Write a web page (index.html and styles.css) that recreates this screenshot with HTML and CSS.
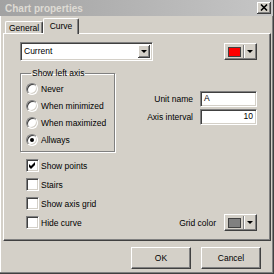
FILE: index.html
```html
<!DOCTYPE html>
<html lang="en">

<head>
    <meta charset="UTF-8">
    <title>Chart properties</title>
    <link rel="stylesheet" href="styles.css">
</head>

<body>
    <div class="dialog">
        <!-- title bar -->
        <div class="titlebar">
            <span class="title">Chart properties</span>
            <span class="closebtn">
                <svg width="8" height="7" viewBox="0 0 8 7"><path d="M1 0.5 L7 6.5 M7 0.5 L1 6.5" stroke="#000" stroke-width="1.6"/></svg>
            </span>
        </div>

        <!-- tabs -->
        <nav class="tabs">
            <div class="tab">General</div>
            <div class="tab active">Curve</div>
        </nav>

        <div class="panel">
            <div class="toprow">
                <div class="combo">
                    <span class="combo-text">Current</span>
                    <span class="dropbtn"><i class="arrow"></i></span>
                </div>
                <div class="colorbtn">
                    <span class="swatch red"></span>
                    <span class="sep"></span>
                    <i class="arrow"></i>
                </div>
            </div>

            <div class="body">
                <div class="leftcol">
                    <fieldset class="group">
                        <legend>Show left axis</legend>
                        <div class="row"><span class="radio"></span><span>Never</span></div>
                        <div class="row"><span class="radio"></span><span>When minimized</span></div>
                        <div class="row"><span class="radio"></span><span>When maximized</span></div>
                        <div class="row"><span class="radio checked"></span><span>Allways</span></div>
                    </fieldset>
                    <div class="checks">
                        <div class="crow">
                            <span class="check">
                                <svg width="7" height="7" viewBox="0 0 7 7"><path d="M0 2 L2 4 L6 0 L6 3 L2 7 L0 5 Z" fill="#000"/></svg>
                            </span>
                            <span>Show points</span>
                        </div>
                        <div class="crow"><span class="check"></span><span>Stairs</span></div>
                        <div class="crow"><span class="check"></span><span>Show axis grid</span></div>
                        <div class="crow"><span class="check"></span><span>Hide curve</span></div>
                    </div>
                </div>

                <div class="rightcol">
                    <div class="fields">
                        <label>Unit name</label>
                        <div class="edit">A</div>
                        <label>Axis interval</label>
                        <div class="edit num">10</div>
                    </div>
                    <div class="gridcolor">
                        <span>Grid color</span>
                        <div class="colorbtn">
                            <span class="swatch gray"></span>
                            <span class="sep"></span>
                            <i class="arrow"></i>
                        </div>
                    </div>
                </div>
            </div>
        </div>

        <div class="buttons">
            <div class="btn">OK</div>
            <div class="btn">Cancel</div>
        </div>
    </div>
</body>

</html>
```

FILE: styles.css
```css
* {
    margin: 0;
    padding: 0;
    box-sizing: border-box;
}

body {
    font-family: "Liberation Sans", Arial, sans-serif;
    font-size: 8.5px;
    color: #000;
    background: #d4d0c8;
}

i {
    font-style: normal;
}

.dialog {
    display: flex;
    flex-direction: column;
    width: 274px;
    height: 274px;
    background: #d4d0c8;
    border-right: 1px solid #404040;
    border-bottom: 1px solid #404040;
    box-shadow: inset -1px -1px #808080, inset 1px 0 #fff;
}

.titlebar {
    display: flex;
    height: 16px;
    padding: 0 2px 0 5px;
    align-items: center;
    justify-content: space-between;
    background: linear-gradient(to right, #a2a2a2, #c6c6c6);
}

.title {
    font-size: 10px;
    font-weight: bold;
    color: #dedbd4;
}

.closebtn {
    display: flex;
    width: 14px;
    height: 12px;
    align-items: center;
    justify-content: center;
    background: #d4d0c8;
    border-right: 1px solid #404040;
    border-bottom: 1px solid #404040;
    box-shadow: inset 1px 1px #fff, inset -1px -1px #808080;
}

/* tabs */
.tabs {
    display: flex;
    height: 15px;
    margin-top: 2px;
    padding-left: 5px;
    align-items: flex-end;
}

.tab {
    display: flex;
    height: 12px;
    width: 38px;
    align-items: center;
    justify-content: center;
    background: #d4d0c8;
    border-top: 1px solid #fff;
    border-left: 1px solid #fff;
    border-right: 1px solid #404040;
    border-radius: 2px 2px 0 0;
    box-shadow: inset -1px 0 #808080;
}

.tab.active {
    position: relative;
    z-index: 1;
    width: 36px;
    height: 16px;
    margin-bottom: -1px;
    padding-bottom: 2px;
}

.panel {
    flex: 1;
    display: flex;
    flex-direction: column;
    margin: 0 2px 0 3px;
    padding: 8px 13px 0 16px;
    border-top: 1px solid #fff;
    border-left: 1px solid #fff;
    border-right: 1px solid #404040;
    border-bottom: 1px solid #404040;
    box-shadow: inset -1px -1px #808080;
}

.toprow {
    display: flex;
    align-items: center;
    justify-content: space-between;
}

.combo {
    display: flex;
    width: 133px;
    height: 19px;
    padding: 2px;
    background: #fff;
    border-top: 1px solid #808080;
    border-left: 1px solid #808080;
    border-right: 1px solid #fff;
    border-bottom: 1px solid #fff;
    box-shadow: inset 1px 1px #404040, inset -1px -1px #d4d0c8;
}

.combo-text {
    flex: 1;
    padding-left: 1px;
    line-height: 13px;
}

.dropbtn {
    display: flex;
    width: 12px;
    align-items: center;
    justify-content: center;
    background: #d4d0c8;
    border-right: 1px solid #404040;
    border-bottom: 1px solid #404040;
    box-shadow: inset 1px 1px #fff, inset -1px -1px #808080;
}

.arrow {
    display: block;
    width: 0;
    height: 0;
    border-left: 3px solid transparent;
    border-right: 3px solid transparent;
    border-top: 3px solid #000;
}

.colorbtn {
    display: flex;
    width: 33px;
    height: 17px;
    padding: 3px;
    align-items: center;
    background: #d4d0c8;
    border-top: 1px solid #fff;
    border-left: 1px solid #fff;
    border-right: 1px solid #404040;
    border-bottom: 1px solid #404040;
    box-shadow: inset -1px -1px #808080;
}

.swatch {
    width: 19px;
    height: 10px;
    border: 1px solid #404040;
}

.swatch.red {
    background: #ff0000;
}

.swatch.gray {
    background: #808080;
}

.sep {
    width: 2px;
    height: 13px;
    margin: 0 2px;
    border-left: 1px solid #808080;
    border-right: 1px solid #fff;
}

.body {
    display: flex;
    margin-top: 7px;
}

.leftcol {
    width: 95px;
}

.group {
    padding: 2px 0 3px 5px;
    border: 1px solid #808080;
    box-shadow: inset 1px 1px #fff, 1px 1px #fff;
}

.group legend {
    margin-left: 5px;
    padding: 0 1px;
    line-height: 10px;
}

.row {
    display: flex;
    height: 17px;
    align-items: center;
    gap: 3px;
}

.radio {
    position: relative;
    width: 12px;
    height: 12px;
    background: #fff;
    border-radius: 50%;
    border: 1px solid;
    border-color: #808080 #fff #fff #808080;
    box-shadow: inset 1px 1px #404040, inset -1px -1px #d4d0c8;
}

.radio.checked::after {
    content: '';
    position: absolute;
    left: 3px;
    top: 3px;
    width: 4px;
    height: 4px;
    border-radius: 50%;
    background: #000;
}

.checks {
    margin-top: 4px;
    padding-left: 6px;
}

.crow {
    display: flex;
    height: 19px;
    align-items: center;
    gap: 2px;
}

.check {
    display: flex;
    width: 13px;
    height: 13px;
    align-items: center;
    justify-content: center;
    background: #fff;
    border: 1px solid;
    border-color: #808080 #fff #fff #808080;
    box-shadow: inset 1px 1px #404040, inset -1px -1px #d4d0c8;
}

.rightcol {
    flex: 1;
    display: flex;
    flex-direction: column;
    justify-content: space-between;
    padding: 23px 0 1px 0;
}

.fields {
    display: grid;
    grid-template-columns: auto 57px;
    justify-content: end;
    align-items: center;
    column-gap: 7px;
    row-gap: 2px;
}

.fields label {
    text-align: right;
}

.edit {
    height: 16px;
    padding: 0 3px;
    line-height: 12px;
    background: #fff;
    border-top: 1px solid #808080;
    border-left: 1px solid #808080;
    border-right: 1px solid #fff;
    border-bottom: 1px solid #fff;
    box-shadow: inset 1px 1px #404040, inset -1px -1px #d4d0c8;
}

.edit.num {
    text-align: right;
}

.gridcolor {
    display: flex;
    align-items: center;
    justify-content: flex-end;
    gap: 8px;
}

.buttons {
    display: flex;
    height: 22px;
    margin: 6px 0 4px;
    padding-right: 12px;
    justify-content: flex-end;
    gap: 10px;
}

.btn {
    display: flex;
    width: 60px;
    align-items: center;
    justify-content: center;
    background: #d4d0c8;
    border-top: 1px solid #fff;
    border-left: 1px solid #fff;
    border-right: 1px solid #404040;
    border-bottom: 1px solid #404040;
    box-shadow: inset -1px -1px #808080;
}
```
